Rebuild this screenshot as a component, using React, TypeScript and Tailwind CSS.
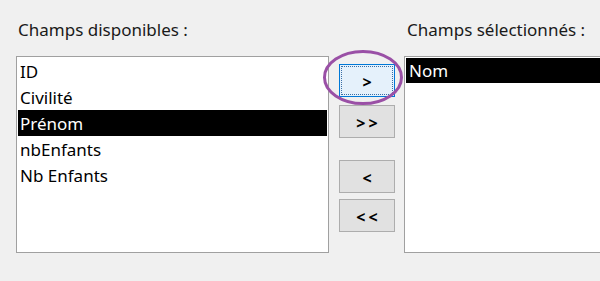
import React from "react";

const font = { fontFamily: '"Noto Sans", "Open Sans", sans-serif' };

function Btn({ label, focused }: { label: string; focused?: boolean }) {
  return (
    <div
      className={
        "relative flex h-[33px] w-[56px] items-center justify-center border text-[16px] font-bold tracking-[3px] text-black " +
        (focused ? "border-[#0078d7] bg-[#e5f1fb]" : "border-[#adadad] bg-[#e1e1e1]")
      }
    >
      {focused && <div className="absolute inset-[1px] border border-dotted border-[#3a6ea5]" />}
      <span className="pl-[3px] pt-[2px]">{label}</span>
    </div>
  );
}

export default function App() {
  const left = ["ID", "Civilité", "Prénom", "nbEnfants", "Nb Enfants"];
  return (
    <div className="relative h-[281px] w-[600px] overflow-hidden bg-[#f0f0f0] text-[17px] text-[#1a1a1a]" style={font}>
      <div className="flex pl-[16px] pt-[18px]">
        <div className="flex w-[313px] shrink-0 flex-col">
          <div className="h-[38px] pl-[2px] leading-[24px]">Champs disponibles :</div>
          <div className="h-[197px] border border-[#a0a0a0] bg-white p-[1px]">
            {left.map((t) => (
              <div
                key={t}
                className={"h-[26px] pl-[2px] leading-[27px] " + (t === "Prénom" ? "bg-black text-white" : "text-black")}
              >
                {t}
              </div>
            ))}
          </div>
        </div>
        <div className="ml-[10px] flex w-[56px] shrink-0 flex-col pt-[46px]">
          <Btn label=">" focused />
          <div className="mt-[8px]">
            <Btn label=">>" />
          </div>
          <div className="mt-[22px]">
            <Btn label="<" />
          </div>
          <div className="mt-[6px]">
            <Btn label="<<" />
          </div>
        </div>
        <div className="ml-[9px] flex w-[220px] shrink-0 flex-col">
          <div className="h-[38px] pl-[3px] leading-[24px]">Champs sélectionnés :</div>
          <div className="h-[197px] border border-[#a0a0a0] bg-white p-[1px]">
            <div className="h-[25px] bg-black pl-[3px] leading-[26px] text-white">Nom</div>
          </div>
        </div>
      </div>
      <svg className="absolute left-[322px] top-[49px]" width="82" height="57" viewBox="0 0 82 57">
        <ellipse cx="41" cy="28.5" rx="38.5" ry="26" fill="none" stroke="#9a50a6" strokeWidth="3" />
      </svg>
    </div>
  );
}
